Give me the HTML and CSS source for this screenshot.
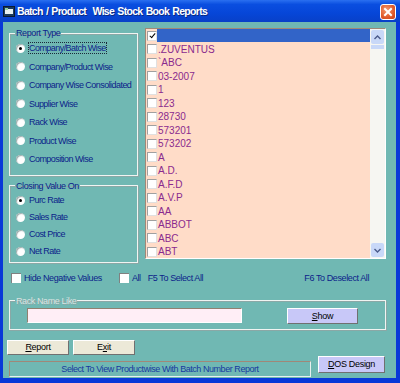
FILE: index.html
```html
<!DOCTYPE html>
<html lang="en">
  <head>
    <meta charset="UTF-8" />
    <meta name="viewport" content="width=device-width, initial-scale=1.0" />
    <title>Batch / Product Wise Stock Book Reports</title>
    <link rel="stylesheet" href="styles.css">
  </head>
  <body>
    <div class="window">
      <div class="titlebar">
        <svg class="app-icon" width="12" height="11" viewBox="0 0 12 11">
          <rect x="0.5" y="0.5" width="11" height="10" fill="#1c3a5c" stroke="#0a1a30"/>
          <rect x="2" y="3" width="8" height="5" fill="#e8f0f0"/>
          <rect x="2" y="2" width="3" height="2" fill="#9ad0a0"/>
        </svg>
        <span class="title">Batch / Product&nbsp; Wise Stock Book Reports</span>
        <div class="close">
          <svg width="10" height="10" viewBox="0 0 10 10">
            <path d="M2 2 L8 8 M8 2 L2 8" stroke="#fff" stroke-width="2" stroke-linecap="square"/>
          </svg>
        </div>
      </div>

      <div class="client">
        <div class="top">
          <div class="side">
            <fieldset class="frame report-type">
              <legend>Report Type</legend>
              <label class="opt"><span class="radio on"></span><span class="focus">Company/Batch Wise</span></label>
              <label class="opt"><span class="radio"></span>Company/Product Wise</label>
              <label class="opt"><span class="radio"></span>Company Wise Consolidated</label>
              <label class="opt"><span class="radio"></span>Supplier Wise</label>
              <label class="opt"><span class="radio"></span>Rack Wise</label>
              <label class="opt"><span class="radio"></span>Product Wise</label>
              <label class="opt"><span class="radio"></span>Composition Wise</label>
            </fieldset>
            <fieldset class="frame closing">
              <legend>Closing Value On</legend>
              <label class="opt"><span class="radio on"></span>Purc Rate</label>
              <label class="opt"><span class="radio"></span>Sales Rate</label>
              <label class="opt"><span class="radio"></span>Cost Price</label>
              <label class="opt"><span class="radio"></span>Net Rate</label>
            </fieldset>
          </div>

          <div class="list">
            <div class="items" id="items"></div>
            <div class="scrollbar">
              <div class="sb-btn">
                <svg width="7" height="5" viewBox="0 0 7 5"><path d="M0.5 4 L3.5 1 L6.5 4" fill="none" stroke="#4a5a8a" stroke-width="1.4"/></svg>
              </div>
              <div class="sb-thumb"></div>
              <div class="sb-track"></div>
              <div class="sb-btn">
                <svg width="7" height="5" viewBox="0 0 7 5"><path d="M0.5 1 L3.5 4 L6.5 1" fill="none" stroke="#4a5a8a" stroke-width="1.4"/></svg>
              </div>
            </div>
          </div>
        </div>

        <div class="options">
          <label class="chk-label"><span class="chk"></span>Hide Negative Values</label>
          <label class="chk-label all"><span class="chk"></span>All</label>
          <span class="hint">F5 To Select All</span>
          <span class="hint deselect">F6 To Deselect All</span>
        </div>

        <fieldset class="frame rack">
          <legend>Rack Name Like</legend>
          <div class="rack-row">
            <div class="input"></div>
            <button type="button" class="btn lilac show"><u>S</u>how</button>
          </div>
        </fieldset>

        <div class="actions">
          <button type="button" class="btn beige"><u>R</u>eport</button>
          <button type="button" class="btn beige">E<u>x</u>it</button>
        </div>

        <div class="footer">
          <div class="status">Select To View Productwise With Batch Number Report</div>
          <button type="button" class="btn lilac dos"><u>D</u>OS Design</button>
        </div>
      </div>
    </div>

    <script>
      const names = ["", ".ZUVENTUS", "`ABC", "03-2007", "1", "123", "28730", "573201",
        "573202", "A", "A.D.", "A.F.D", "A.V.P", "AA", "ABBOT", "ABC", "ABT"];

      const renderList = () => {
        const box = document.getElementById("items");
        names.forEach((name, index) => {
          const row = document.createElement("div");
          row.className = index === 0 ? "row selected" : "row";
          const chk = document.createElement("span");
          chk.className = index === 0 ? "chk small checked" : "chk small";
          const text = document.createElement("span");
          text.className = "name";
          text.innerText = name;
          row.appendChild(chk);
          row.appendChild(text);
          box.appendChild(row);
        });
      };
      renderList();
    </script>
  </body>
</html>
```

FILE: styles.css
```css
* {
  box-sizing: border-box;
}
body {
  margin: 0;
  width: 400px;
  height: 383px;
  overflow: hidden;
  font-family: "Liberation Sans", Arial, sans-serif;
  font-size: 9px;
  letter-spacing: -0.4px;
}
.window {
  width: 400px;
  height: 383px;
  background: #0838d8;
  display: flex;
  flex-direction: column;
  padding: 0 4px 5px 3px;
}
.titlebar {
  height: 22px;
  margin: 0 -4px 0 -3px;
  padding: 0 4px 0 3px;
  display: flex;
  align-items: center;
  background: linear-gradient(#2a6ff0 0%, #0a4ee0 20%, #0646d8 60%, #0840c8 100%);
}
.app-icon {
  margin-top: 1px;
}
.title {
  margin-left: 2px;
  color: #fff;
  font-weight: bold;
  font-size: 10.5px;
  letter-spacing: -0.7px;
  word-spacing: 1px;
  text-shadow: 1px 1px 0 #0a2a80;
  flex: 1;
}
.close {
  width: 16px;
  height: 16px;
  margin-top: 1px;
  border: 1px solid #fff;
  border-radius: 3px;
  background: radial-gradient(circle at 40% 35%, #f49a70, #e05a2a 60%, #c8401a);
  display: flex;
  align-items: center;
  justify-content: center;
}
.client {
  flex: 1;
  background: #70b8b3;
  padding: 5px 0 0 6px;
  display: flex;
  flex-direction: column;
}
.top {
  display: flex;
  gap: 7px;
}
.side {
  width: 129px;
  display: flex;
  flex-direction: column;
}
.frame {
  margin: 0;
  min-width: 0;
  border: 1px solid #f0f4f2;
  box-shadow: inset 1px 1px 0 #8aa8a6, 1px 1px 0 #8aa8a6;
  padding: 0 0 0 6px;
}
.frame legend {
  color: #0c1e8a;
  line-height: 12px;
  padding: 0 1px;
  margin-left: -1px;
}
.opt {
  display: flex;
  align-items: center;
  gap: 4px;
  color: #0c1e8a;
  white-space: nowrap;
  letter-spacing: -0.55px;
}
.report-type {
  padding-bottom: 6px;
}
.report-type .opt {
  height: 18.5px;
}
.focus {
  outline: 1px dotted #1a2a3a;
  outline-offset: 0;
}
.closing {
  margin-top: 4px;
  padding-bottom: 2px;
}
.closing .opt {
  height: 17px;
}
.radio {
  width: 9px;
  height: 9px;
  border-radius: 50%;
  background: #fff;
  box-shadow: inset 1px 1px 1px #9aa;
  position: relative;
  flex: none;
}
.radio.on::after {
  content: "";
  position: absolute;
  left: 3px;
  top: 3px;
  width: 3px;
  height: 3px;
  border-radius: 50%;
  background: #000;
}
.list {
  width: 241px;
  height: 231px;
  margin-top: 1px;
  display: flex;
  background: #ffdcc8;
  border-top: 1px solid #a08878;
  border-left: 1px solid #a08878;
  border-right: 1px solid #fff;
  border-bottom: 1px solid #fff;
}
.items {
  flex: 1;
  overflow: hidden;
  font-size: 10px;
  letter-spacing: 0;
}
.row {
  height: 13.5px;
  display: flex;
  align-items: center;
  padding-left: 1px;
  color: #8a2a8e;
}
.name {
  flex: 1;
  height: 13px;
  line-height: 13px;
  padding-left: 1px;
}
.row.selected .name {
  background: #3264c8;
}
.chk {
  width: 11px;
  height: 11px;
  background: #fff;
  border: 1px solid #a0a0a0;
  border-right-color: #e0e0e0;
  border-bottom-color: #e0e0e0;
  flex: none;
  position: relative;
}
.chk.small {
  width: 10px;
  height: 10px;
}
.chk.checked::after {
  content: "";
  position: absolute;
  left: 2.5px;
  top: 0.5px;
  width: 2px;
  height: 5px;
  border: solid #000;
  border-width: 0 1.5px 1.5px 0;
  transform: rotate(40deg);
}
.scrollbar {
  width: 15px;
  display: flex;
  flex-direction: column;
  background: #f6f6f2;
}
.sb-btn {
  height: 14px;
  margin: 1px 1px 0;
  background: #c8d8f8;
  border-radius: 2px;
  display: flex;
  align-items: center;
  justify-content: center;
}
.sb-btn:last-child {
  margin: 0 1px 1px;
}
.sb-thumb {
  height: 4px;
  margin: 1px 1px 0;
  background: #c8d8f8;
}
.sb-track {
  flex: 1;
}
.options {
  display: flex;
  align-items: center;
  height: 16px;
  margin-top: 7px;
  color: #0c1e8a;
  white-space: nowrap;
}
.chk-label {
  display: flex;
  align-items: center;
  gap: 3px;
  padding-left: 2px;
}
.chk-label .chk {
  width: 10px;
  height: 10px;
  border: none;
  box-shadow: inset 1px 1px 0 #808080;
}
.chk-label.all {
  margin-left: 15px;
}
.hint {
  margin-left: 7px;
}
.hint.deselect {
  margin-left: auto;
  margin-right: 27px;
}
.rack {
  margin-top: 9px;
  width: 377px;
  padding: 0 0 5px 17px;
}
.rack legend {
  color: #d8e4e2;
  text-shadow: 1px 1px 0 #8aa8a6;
  margin-left: -12px;
}
.rack-row {
  display: flex;
  align-items: center;
  margin-top: 1px;
}
.input {
  width: 215px;
  height: 15px;
  background: #ffeef6;
  border-top: 1px solid #908070;
  border-left: 1px solid #908070;
  border-right: 1px solid #fff;
  border-bottom: 1px solid #fff;
}
.btn {
  font-family: "Liberation Sans", Arial, sans-serif;
  font-size: 9px;
  letter-spacing: -0.3px;
  color: #000;
  padding: 0;
  border: 1px solid;
  border-color: #fff #707070 #707070 #fff;
}
.btn.lilac {
  background: #c8c8f8;
}
.btn.beige {
  background: #ece9d8;
}
.show {
  width: 71px;
  height: 16px;
  margin-left: 45px;
}
.actions {
  display: flex;
  gap: 4px;
  margin-top: 10px;
  margin-left: -2px;
}
.actions .btn {
  width: 62px;
  height: 15px;
}
.footer {
  display: flex;
  align-items: flex-start;
  margin-top: 0;
}
.status {
  width: 302px;
  height: 16px;
  margin-top: 6px;
  border-top: 1px solid #a08878;
  border-left: 1px solid #a08878;
  border-right: 1px solid #e8f0ee;
  border-bottom: 1px solid #e8f0ee;
  color: #1838a0;
  text-align: center;
  line-height: 14px;
  white-space: nowrap;
  letter-spacing: -0.45px;
}
.dos {
  width: 67px;
  height: 17px;
  margin-top: 1px;
  margin-left: 7px;
}
```
